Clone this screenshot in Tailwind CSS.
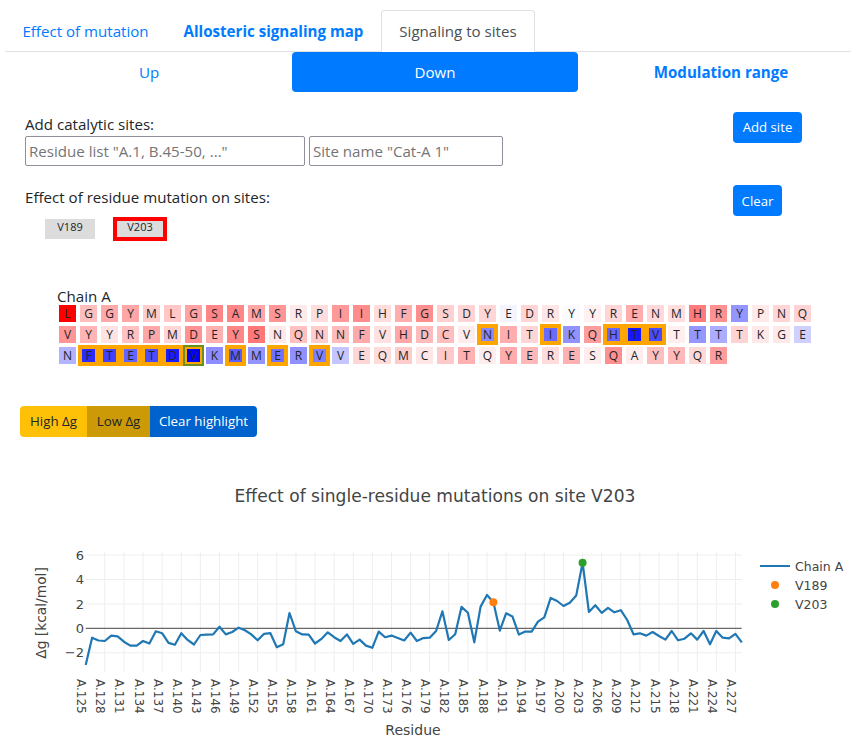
<!DOCTYPE html>
<html lang="en">
<head>
  <meta charset="UTF-8" />
  <title>Signaling to sites</title>
  <script src="https://cdn.jsdelivr.net/npm/@tailwindcss/browser@4"></script>
</head>
<body class="w-[851px] h-[756px] overflow-hidden bg-white text-[15.1px] text-[#212529] font-['Open_Sans',sans-serif]">
  <!-- tabs -->
  <div class="flex h-[52px] ml-[5px] pt-[10px] border-b border-[#dee2e6]">
    <a class="w-[161px] h-[42px] flex items-center justify-center text-[#007bff]">Effect of mutation</a>
    <a class="w-[215px] h-[42px] flex items-center justify-center text-[#007bff] font-bold">Allosteric signaling map</a>
    <a class="w-[154px] h-[42px] flex items-center justify-center text-[#495057] bg-white border border-[#dee2e6] border-b-white rounded-t-[4px]">Signaling to sites</a>
  </div>
  <!-- pills -->
  <div class="flex w-[858px] h-[40px] ml-[6px]">
    <a class="w-[286px] flex items-center justify-center text-[#007bff]">Up</a>
    <a class="w-[286px] flex items-center justify-center text-white bg-[#007bff] rounded-[4px]">Down</a>
    <a class="w-[286px] flex items-center justify-center text-[#007bff] font-bold">Modulation range</a>
  </div>
  <!-- add site -->
  <div class="flex justify-between w-[777px] h-[93px] ml-[25px] pt-[20px]">
    <div>
      <div class="h-[24px] leading-[24px]">Add catalytic sites:</div>
      <div class="flex gap-[4px]">
        <input class="w-[280px] h-[30px] px-[3px] border border-[#8f8f9d] rounded-[2px] placeholder:text-[#757575]" placeholder="Residue list &quot;A.1, B.45-50, ...&quot;" />
        <input class="w-[194px] h-[30px] px-[3px] border border-[#8f8f9d] rounded-[2px] placeholder:text-[#757575]" placeholder="Site name &quot;Cat-A 1&quot;" />
      </div>
    </div>
    <button class="w-[69px] h-[31px] text-[13.2px] text-white bg-[#007bff] rounded-[4px]">Add site</button>
  </div>
  <!-- sites -->
  <div class="flex justify-between w-[757px] h-[32px] ml-[25px] leading-[24px]">
    <div>Effect of residue mutation on sites:</div>
    <button class="w-[49px] h-[31px] text-[13.2px] text-white bg-[#007bff] rounded-[4px]">Clear</button>
  </div>
  <div class="flex items-center gap-[18px] h-[24px] ml-[45px] text-[11px]">
    <div class="w-[50px] h-[20px] bg-[#dcdcdc] text-center leading-[16px]">V189</div>
    <div class="w-[54px] h-[24px] bg-[#dcdcdc] text-center border-4 border-[#ff0000] leading-[12px]">V203</div>
  </div>
  <!-- sequence -->
  <div class="ml-[57px] mt-[49px] h-[13px] leading-[12px]">Chain A</div>
  <div id="seq" class="ml-[57px] grid grid-cols-[repeat(36,21px)] text-[12px]"></div>
  <!-- highlight buttons -->
  <div class="flex ml-[20px] mt-[40px] h-[31px] text-[13.3px]">
    <button class="w-[67px] bg-[#ffc107] rounded-l-[4px]">High Δg</button>
    <button class="w-[63px] bg-[#cc9a06]">Low Δg</button>
    <button class="w-[107px] bg-[#0062cc] text-white rounded-r-[4px]">Clear highlight</button>
  </div>
  <!-- chart -->
  <svg id="chart" class="mt-[33px] font-['DejaVu_Sans',sans-serif]" width="851" height="286" viewBox="0 470 851 286"></svg>

  <script>
    const sequence = "LGGYMLGSAMSRPIIHFGSDYEDRYYRENMHRYPNQVYYRPMDEYSNQNNFVHDCVNITIKQHTVTTTTKGENFTETDVKMMERVVEQMCITQYERESQAYYQR";
    const dg = [-3,-0.77,-1,-1.04,-0.6,-0.66,-1.1,-1.42,-1.42,-1.04,-1.25,-0.25,-0.4,-1.2,-1.35,-0.4,-0.95,-1.33,-0.55,-0.52,
      -0.5,0.13,-0.5,-0.3,0.05,-0.16,-0.5,-0.98,-0.45,-0.4,-1.55,-1.3,1.25,-0.25,-0.5,-0.52,-1.25,-0.87,-0.33,-0.73,
      -1.04,-0.5,-1.28,-0.93,-1.42,-1.6,-0.27,-0.74,-0.6,-0.8,-1,-0.35,-1.04,-0.8,-0.77,-0.22,1.39,-0.96,-0.49,1.75,
      1.28,-1.15,1.78,2.73,2.13,-0.19,1.23,0.96,-0.52,-0.27,-0.27,0.55,0.9,2.49,2.24,1.83,2.1,2.68,5.38,1.34,
      1.89,1.26,1.67,1.31,1.48,0.68,-0.49,-0.41,-0.6,-0.3,-0.63,-0.93,-0.22,-0.98,-0.85,-0.41,-0.93,-0.22,-1.31,-0.22,
      -0.77,-0.82,-0.46,-1.15];
    const highlighted = [56, 59, 62, 63, 64, 73, 74, 75, 76, 77, 78, 80, 82, 84];

    function cellColor(v) {
      const t = Math.min(Math.abs(v) / 3, 1);
      const c = Math.round(255 * (1 - t));
      return v < 0 ? `rgb(255,${c},${c})` : `rgb(${c},${c},255)`;
    }

    const seq = document.getElementById("seq");
    sequence.split("").forEach((letter, i) => {
      const on = highlighted.includes(i);
      const wrap = document.createElement("div");
      wrap.className = "w-[21px] h-[21px] flex items-center justify-center" + (on ? " bg-[#ffa500]" : "") + (i === 78 ? " border-2 border-[#6b8e23]" : "");
      const cell = document.createElement("div");
      cell.className = (on ? "w-[13px] h-[13px]" : "w-[17px] h-[17px]") + " flex items-center justify-center leading-none";
      cell.style.backgroundColor = cellColor(dg[i]);
      cell.textContent = letter;
      wrap.appendChild(cell);
      seq.appendChild(wrap);
    });

    const xOf = i => 85.7 + 6.37 * i;
    const yOf = v => 628.3 - 12.2 * v;
    let svg = "";
    svg += `<text x="435" y="502" text-anchor="middle" font-size="17.1" fill="#444">Effect of single-residue mutations on site V203</text>`;
    for (let i = 3; i <= 102; i += 3) {
      svg += `<line x1="${xOf(i)}" x2="${xOf(i)}" y1="552" y2="672" stroke="#eee" />`;
    }
    for (const v of [-2, 2, 4, 6]) {
      svg += `<line x1="85.7" x2="741.7" y1="${yOf(v)}" y2="${yOf(v)}" stroke="#eee" />`;
    }
    svg += `<line x1="85.7" x2="741.7" y1="${yOf(0)}" y2="${yOf(0)}" stroke="#444" />`;
    for (const v of [-2, 0, 2, 4, 6]) {
      svg += `<text x="84" y="${yOf(v) + 4.7}" text-anchor="end" font-size="13" fill="#444">${v < 0 ? "−" + -v : v}</text>`;
    }
    for (let i = 0; i <= 102; i += 3) {
      svg += `<text transform="translate(${xOf(i) - 8.5} 679) rotate(90)" font-size="12" fill="#444">A.${125 + i}</text>`;
    }
    const points = dg.map((v, i) => `${xOf(i).toFixed(1)},${yOf(v).toFixed(1)}`).join(" ");
    svg += `<polyline points="${points}" fill="none" stroke="#1f77b4" stroke-width="2.2" stroke-linejoin="round" />`;
    svg += `<circle cx="${xOf(64)}" cy="${yOf(2.13)}" r="4" fill="#ff7f0e" />`;
    svg += `<circle cx="${xOf(78)}" cy="${yOf(5.38)}" r="4" fill="#2ca02c" />`;
    svg += `<text transform="translate(46 613) rotate(-90)" text-anchor="middle" font-size="13.8" fill="#444">Δg [kcal/mol]</text>`;
    svg += `<text x="413" y="735" text-anchor="middle" font-size="14" fill="#444">Residue</text>`;
    svg += `<line x1="760" x2="790" y1="566" y2="566" stroke="#1f77b4" stroke-width="2" />`;
    svg += `<text x="795" y="571" font-size="12.5" fill="#444">Chain A</text>`;
    svg += `<circle cx="775" cy="585" r="4" fill="#ff7f0e" />`;
    svg += `<text x="795" y="590" font-size="12.5" fill="#444">V189</text>`;
    svg += `<circle cx="775" cy="604" r="4" fill="#2ca02c" />`;
    svg += `<text x="795" y="609" font-size="12.5" fill="#444">V203</text>`;
    document.getElementById("chart").innerHTML = svg;
  </script>
</body>
</html>
